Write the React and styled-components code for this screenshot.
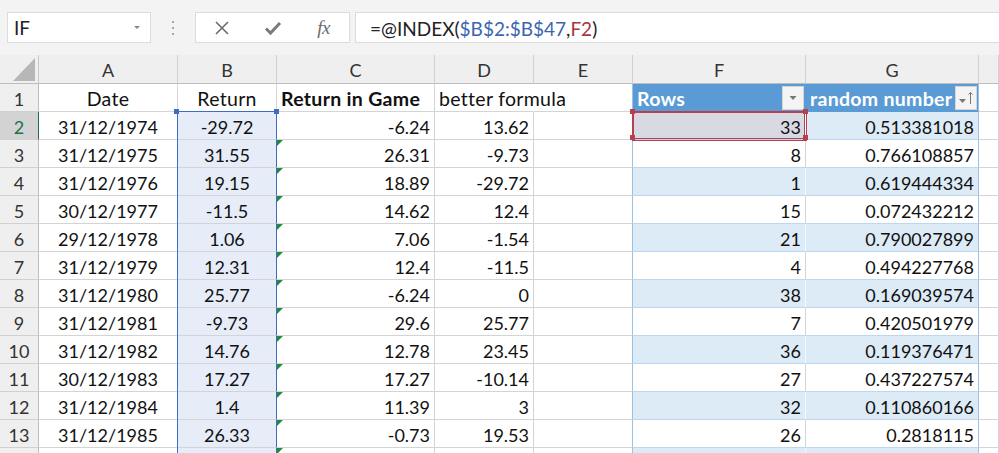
import React from "react";
import styled, { createGlobalStyle } from "styled-components";

const GlobalStyle = createGlobalStyle`
  html, body {
    margin: 0;
    padding: 0;
    background: #fff;
  }
  * {
    box-sizing: border-box;
  }
`;

const rows = [
  ["31/12/1974", "-29.72", "-6.24", "13.62", "33", "0.513381018"],
  ["31/12/1975", "31.55", "26.31", "-9.73", "8", "0.766108857"],
  ["31/12/1976", "19.15", "18.89", "-29.72", "1", "0.619444334"],
  ["30/12/1977", "-11.5", "14.62", "12.4", "15", "0.072432212"],
  ["29/12/1978", "1.06", "7.06", "-1.54", "21", "0.790027899"],
  ["31/12/1979", "12.31", "12.4", "-11.5", "4", "0.494227768"],
  ["31/12/1980", "25.77", "-6.24", "0", "38", "0.169039574"],
  ["31/12/1981", "-9.73", "29.6", "25.77", "7", "0.420501979"],
  ["31/12/1982", "14.76", "12.78", "23.45", "36", "0.119376471"],
  ["30/12/1983", "17.27", "17.27", "-10.14", "27", "0.437227574"],
  ["31/12/1984", "1.4", "11.39", "3", "32", "0.110860166"],
  ["31/12/1985", "26.33", "-0.73", "19.53", "26", "0.2818115"],
  ["", "", "", "", "", ""],
];

const columns = ["A", "B", "C", "D", "E", "F", "G", ""];

const grid = "#d4d4d4";
const band = "#ddebf7";
const tableLine = "#bdd7ee";
const refBlue = "#3f6cc2";
const refRed = "#b8404e";

export default function App() {
  return (
    <Page>
      <GlobalStyle />
      <FormulaBar>
        <NameBox>
          <span>IF</span>
          <Caret />
        </NameBox>
        <Grip>
          <i />
          <i />
          <i />
        </Grip>
        <ActionBox>
          <ActionIcon>
            <svg width="16" height="16" viewBox="0 0 16 16">
              <path d="M2 2 L14 14 M14 2 L2 14" stroke="#6b6b6b" strokeWidth="1.6" fill="none" />
            </svg>
          </ActionIcon>
          <ActionIcon>
            <svg width="18" height="16" viewBox="0 0 18 16">
              <path d="M2 8.5 L6.5 13 L16 3" stroke="#7a7a7a" strokeWidth="3" fill="none" />
            </svg>
          </ActionIcon>
          <ActionIcon>
            <Fx>fx</Fx>
          </ActionIcon>
        </ActionBox>
        <FormulaBox>
          =@INDEX(<Ref $color="#3a66b0">$B$2:$B$47</Ref>,<Ref $color="#a8343f">F2</Ref>)
        </FormulaBox>
      </FormulaBar>

      <Sheet>
        <Corner>
          <svg width="22" height="23" viewBox="0 0 22 23">
            <path d="M22 0 L22 23 L0 23 Z" fill="#b7b7b7" />
          </svg>
        </Corner>
        {columns.map((c, i) => (
          <ColHead key={i}>{c}</ColHead>
        ))}

        <RowHead>1</RowHead>
        <Cell $align="center" $label>Date</Cell>
        <Cell $align="center" $label>Return</Cell>
        <Cell $bold $label>Return in Game</Cell>
        <Cell $spill $label>better formula</Cell>
        <Cell $rc="#9bc2e6" />
        <Cell $bold $label $bg="#5b9bd5" $color="#fff" $rc="#5b9bd5" $bc="#5b9bd5">
          Rows
          <FilterButton>
            <svg width="10" height="6" viewBox="0 0 10 6">
              <path d="M1.5 1 L8.5 1 L5 5 Z" fill="#777" />
            </svg>
          </FilterButton>
        </Cell>
        <Cell $bold $label $bg="#5b9bd5" $color="#fff" $rc="#9bc2e6" $bc="#5b9bd5">
          random number
          <FilterButton>
            <svg width="18" height="16" viewBox="0 0 18 16">
              <path d="M2 9 L9 9 L5.5 13 Z" fill="#777" />
              <path d="M13.5 14 L13.5 2.5 M11.5 4.5 L13.5 2.5 L15.5 4.5" stroke="#777" strokeWidth="1" fill="none" />
            </svg>
          </FilterButton>
        </Cell>
        <Cell />

        {rows.map((r, i) => {
          const n = i + 2;
          const banded = n % 2 === 0;
          const active = n === 2;
          return (
            <React.Fragment key={n}>
              <RowHead $active={active}>{n < 14 ? n : ""}</RowHead>
              <Cell $align="center">{r[0]}</Cell>
              <RangeCell $align="center" $first={n === 2}>
                {r[1]}
              </RangeCell>
              <Cell $align="right" $flag={n >= 3}>
                {r[2]}
              </Cell>
              <Cell $align="right">{r[3]}</Cell>
              <Cell $rc="#9bc2e6" />
              {active ? (
                <ActiveCell $align="right" $rc="#ffffff" $bc={tableLine}>
                  {r[4]}
                </ActiveCell>
              ) : (
                <Cell
                  $align="right"
                  $bg={banded ? band : "#fff"}
                  $rc={banded ? "#f4f8fc" : grid}
                  $bc={tableLine}
                >
                  {r[4]}
                </Cell>
              )}
              <Cell $align="right" $bg={banded ? band : "#fff"} $rc="#9bc2e6" $bc={tableLine}>
                {r[5]}
              </Cell>
              <Cell />
            </React.Fragment>
          );
        })}
      </Sheet>
    </Page>
  );
}

const Page = styled.div`
  width: 999px;
  height: 453px;
  overflow: hidden;
  background: #fff;
  font-family: Lato, "Open Sans", sans-serif;
  color: #111;
`;

const FormulaBar = styled.div`
  display: flex;
  align-items: center;
  height: 55px;
  padding: 12px 0 12px 7px;
  background: #f3f3f3;
`;

const NameBox = styled.div`
  width: 144px;
  height: 31px;
  display: flex;
  align-items: center;
  justify-content: space-between;
  padding: 0 10px 0 6px;
  background: #fff;
  border: 1px solid #dcdcdc;
  font-size: 19px;
  color: #222;
`;

const Caret = styled.span`
  width: 0;
  height: 0;
  border-left: 3px solid transparent;
  border-right: 3px solid transparent;
  border-top: 3px solid #8a8a8a;
`;

const Grip = styled.div`
  width: 44px;
  display: flex;
  flex-direction: column;
  align-items: center;
  gap: 4px;

  i {
    width: 2px;
    height: 2px;
    background: #a5a5a5;
  }
`;

const ActionBox = styled.div`
  width: 155px;
  height: 31px;
  display: grid;
  grid-template-columns: repeat(3, 51px);
  align-items: center;
  background: #fff;
  border: 1px solid #dcdcdc;
`;

const ActionIcon = styled.div`
  display: flex;
  justify-content: center;
  align-items: center;
`;

const Fx = styled.span`
  font-family: "Liberation Serif", serif;
  font-style: italic;
  font-size: 19px;
  color: #6b6b6b;
  letter-spacing: -0.5px;
`;

const FormulaBox = styled.div`
  flex: 1;
  height: 31px;
  margin-left: 5px;
  display: flex;
  align-items: center;
  padding-left: 14px;
  padding-top: 1px;
  background: #fff;
  border: 1px solid #dcdcdc;
  border-right: none;
  font-size: 19px;
  color: #222;
  white-space: pre;
`;

const Ref = styled.span`
  color: ${(p) => p.$color};
`;

const Sheet = styled.div`
  display: grid;
  grid-template-columns: 39px 139px 99px 158px 99px 99px 173px 173px 20px;
  grid-template-rows: 29px;
  grid-auto-rows: 28px;
  font-size: 18px;
`;

const Corner = styled.div`
  display: flex;
  align-items: flex-end;
  justify-content: flex-end;
  padding: 0 3px 2px 0;
  background: #efefef;
  border-right: 1px solid #c8c8c8;
  border-bottom: 1px solid #bdbdbd;
`;

const ColHead = styled.div`
  display: flex;
  align-items: center;
  justify-content: center;
  padding-top: 2px;
  background: #efefef;
  border-right: 1px solid #d0d0d0;
  border-bottom: 1px solid #bdbdbd;
  color: #333;
`;

const RowHead = styled.div`
  display: flex;
  align-items: center;
  justify-content: center;
  padding-top: 2px;
  background: ${(p) => (p.$active ? "#d3d3d3" : "#efefef")};
  border-right: 1px solid ${(p) => (p.$active ? "#217346" : "#bdbdbd")};
  border-bottom: 1px solid #d0d0d0;
  color: ${(p) => (p.$active ? "#217346" : "#333")};
`;

const Cell = styled.div`
  position: relative;
  display: flex;
  align-items: center;
  justify-content: ${(p) =>
    p.$align === "center" ? "center" : p.$align === "right" ? "flex-end" : "flex-start"};
  padding: 2px 4px 0 4px;
  white-space: nowrap;
  overflow: ${(p) => (p.$spill ? "visible" : "hidden")};
  z-index: ${(p) => (p.$spill ? 1 : "auto")};
  font-size: ${(p) => (p.$label ? "19.5px" : "18px")};
  letter-spacing: ${(p) => (p.$label ? "0.3px" : "0")};
  font-weight: ${(p) => (p.$bold ? 700 : 400)};
  background: ${(p) => p.$bg || "transparent"};
  color: ${(p) => p.$color || "#111"};
  border-right: 1px solid ${(p) => (p.$spill ? "transparent" : p.$rc || grid)};
  border-bottom: 1px solid ${(p) => p.$bc || grid};

  &::before {
    content: "";
    display: ${(p) => (p.$flag ? "block" : "none")};
    position: absolute;
    left: 0;
    top: 0;
    border-top: 6px solid #1f8b3b;
    border-right: 6px solid transparent;
  }
`;

const RangeCell = styled(Cell)`
  overflow: visible;
  background: #e6edf8;
  border-right: 1px solid ${refBlue};
  box-shadow: -1px 0 0 0 ${refBlue}
    ${(p) => (p.$first ? `, 0 -1px 0 0 ${refBlue}` : "")};

  &::before,
  &::after {
    content: "";
    display: ${(p) => (p.$first ? "block" : "none")};
    position: absolute;
    top: -3px;
    width: 5px;
    height: 5px;
    background: ${refBlue};
    border: none;
  }
  &::before {
    left: -4px;
  }
  &::after {
    right: -3px;
  }
`;

const ActiveCell = styled(Cell)`
  overflow: visible;
  background: #d9d9e3;
  box-shadow: inset 0 0 0 1px ${refRed}, 0 0 0 1px ${refRed};
  z-index: 2;

  &::before,
  &::after {
    content: "";
    display: block;
    position: absolute;
    width: 5px;
    height: 5px;
    background: ${refRed};
    border: none;
    top: -3px;
    box-shadow: 0 26px 0 0 ${refRed};
  }
  &::before {
    left: -3px;
  }
  &::after {
    right: -3px;
  }
`;

const FilterButton = styled.span`
  position: absolute;
  top: 2px;
  right: 1px;
  width: 22px;
  height: 24px;
  display: flex;
  align-items: center;
  justify-content: center;
  background: #f4f4f4;
  border: 1px solid #d6d6d6;
`;
